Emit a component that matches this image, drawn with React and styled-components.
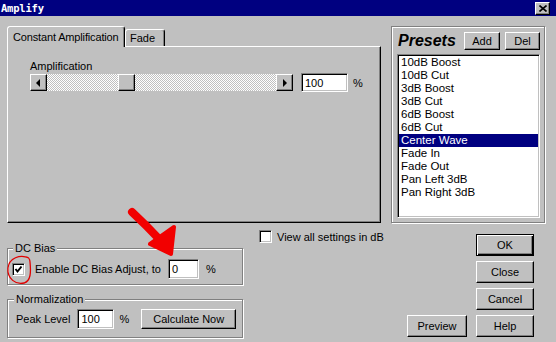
import React from "react";
import styled, { createGlobalStyle } from "styled-components";

const GlobalStyle = createGlobalStyle`
  html, body {
    margin: 0;
    padding: 0;
    background: #c0c0c0;
  }
  body {
    font-family: "Liberation Sans", Arial, sans-serif;
    font-size: 11px;
    color: #000;
  }
  * {
    box-sizing: border-box;
  }
`;

const raised = `
  background: #c0c0c0;
  border: 1px solid;
  border-color: #fff #000 #000 #fff;
  box-shadow: inset -1px -1px 0 #808080;
`;

const sunken = `
  background: #fff;
  border: 1px solid;
  border-color: #808080 #fff #fff #808080;
  box-shadow: inset 1px 1px 0 #000, inset -1px -1px 0 #c0c0c0;
`;

const etched = `
  border: 1px solid #808080;
  box-shadow: inset 1px 1px 0 #fff, 1px 1px 0 #fff;
`;

const Window = styled.div`
  position: relative;
  width: 556px;
  height: 342px;
  overflow: hidden;
  background: #c0c0c0;
`;

const TitleBar = styled.div`
  height: 16px;
  background: #000080;
  display: flex;
  align-items: center;
  justify-content: space-between;
  padding: 0 6px 0 1px;
`;

const Title = styled.div`
  font-family: "DejaVu Sans Mono", "Liberation Mono", monospace;
  font-weight: bold;
  font-size: 10.5px;
  letter-spacing: -0.2px;
  color: #fff;
`;

const CloseBox = styled.div`
  ${raised}
  width: 15px;
  height: 13px;
  display: flex;
  align-items: center;
  justify-content: center;
`;

const Body = styled.div`
  padding: 10px 11px 0 7px;
  display: flex;
  flex-direction: column;
`;

const TopRow = styled.div`
  display: flex;
  height: 197px;
  gap: 10px;
`;

const TabArea = styled.div`
  width: 374px;
  display: flex;
  flex-direction: column;
`;

const TabStrip = styled.div`
  display: flex;
  align-items: flex-end;
  height: 20px;
`;

const Tab = styled.div`
  position: relative;
  z-index: ${(p) => (p.$active ? 1 : 0)};
  width: ${(p) => p.$w}px;
  height: ${(p) => (p.$active ? 21 : 17)}px;
  margin-bottom: ${(p) => (p.$active ? -1 : 0)}px;
  padding-left: ${(p) => (p.$active ? 5 : 4)}px;
  display: flex;
  align-items: center;
  background: #c0c0c0;
  border: 1px solid;
  border-bottom: none;
  border-color: #fff #000 transparent #fff;
  border-radius: 3px 3px 0 0;
  box-shadow: inset -1px 0 0 #808080;
  white-space: nowrap;
  letter-spacing: ${(p) => (p.$active ? "-0.15px" : "0")};
`;

const Panel = styled.div`
  flex: 1;
  border: 1px solid;
  border-color: #fff #000 #000 #fff;
  box-shadow: inset -1px -1px 0 #808080;
  padding: 13px 0 0 22px;
`;

const FieldLabel = styled.div`
  height: 13px;
  line-height: 13px;
`;

const Row = styled.div`
  display: flex;
  align-items: center;
  height: ${(p) => p.$h || 19}px;
`;

const ScrollBar = styled.div`
  display: flex;
  width: 263px;
  height: 17px;
`;

const ArrowButton = styled.div`
  ${raised}
  width: 17px;
  height: 17px;
  display: flex;
  align-items: center;
  justify-content: center;
  &::after {
    content: "";
    border-top: 4px solid transparent;
    border-bottom: 4px solid transparent;
    ${(p) =>
      p.$dir === "left"
        ? "border-right: 4px solid #000; margin-left: -1px;"
        : "border-left: 4px solid #000; margin-left: 1px;"}
  }
`;

const Track = styled.div`
  flex: 1;
  display: flex;
  background-color: #fff;
  background-image: repeating-conic-gradient(#c0c0c0 0 25%, #fff 0 50%);
  background-size: 2px 2px;
`;

const Thumb = styled.div`
  ${raised}
  width: 17px;
  height: 17px;
`;

const TextBox = styled.div`
  ${sunken}
  width: ${(p) => p.$w}px;
  height: ${(p) => p.$h || 19}px;
  margin-left: ${(p) => p.$ml || 0}px;
  padding: 0 3px;
  display: flex;
  align-items: center;
  font-size: 11px;
`;

const Unit = styled.span`
  margin-left: ${(p) => p.$ml || 5}px;
`;

const PresetsGroup = styled.div`
  ${etched}
  width: 154px;
  padding: 5px 4px 4px 5px;
  display: flex;
  flex-direction: column;
`;

const PresetsHeader = styled.div`
  display: flex;
  align-items: center;
  height: 17px;
  gap: 5px;
  margin-bottom: 5px;
`;

const PresetsTitle = styled.div`
  flex: 1;
  padding-left: 1px;
  padding-top: 1px;
  font-size: 16px;
  font-weight: bold;
  font-style: italic;
  color: #000;
`;

const Button = styled.div`
  ${raised}
  width: ${(p) => p.$w}px;
  height: ${(p) => p.$h || 22}px;
  margin-left: ${(p) => p.$ml || 0}px;
  display: flex;
  align-items: center;
  justify-content: center;
  font-size: 11px;
  white-space: nowrap;
  ${(p) =>
    p.$default &&
    `border-color: #000;
     box-shadow: inset 1px 1px 0 #fff, inset -1px -1px 0 #000, inset -2px -2px 0 #808080;`}
`;

const ListBox = styled.div`
  ${sunken}
  flex: 1;
  padding: 1px;
`;

const ListItem = styled.div`
  height: 13px;
  line-height: 13px;
  padding-left: 2px;
  font-size: 11.5px;
  white-space: nowrap;
  background: ${(p) => (p.$selected ? "#000080" : "transparent")};
  color: ${(p) => (p.$selected ? "#fff" : "#000")};
`;

const BottomRow = styled.div`
  display: flex;
  height: 113px;
  margin-top: 6px;
`;

const LeftStack = styled.div`
  width: 236px;
  padding-top: 13px;
  display: flex;
  flex-direction: column;
  gap: 8px;
`;

const GroupBox = styled.fieldset`
  ${etched}
  margin: 0;
  min-width: 0;
  padding: ${(p) => p.$pt}px 5px ${(p) => p.$pb}px ${(p) => p.$pl}px;
`;

const Caption = styled.legend`
  margin-left: ${(p) => p.$ml}px;
  padding: 0 2px;
  line-height: 13px;
  height: 13px;
  background: #c0c0c0;
`;

const CheckBox = styled.div`
  ${sunken}
  width: 13px;
  height: 13px;
  flex: none;
  display: flex;
  align-items: center;
  justify-content: center;
`;

const CheckLabel = styled.span`
  margin-left: ${(p) => p.$ml}px;
  white-space: nowrap;
`;

const MiddleCol = styled.div`
  flex: 1;
  display: flex;
  flex-direction: column;
  justify-content: space-between;
  align-items: flex-start;
  padding: 1px 9px 5px 16px;
  & > :last-child {
    align-self: flex-end;
  }
`;

const ButtonCol = styled.div`
  width: 58px;
  margin-right: 11px;
  padding-top: 5px;
  display: flex;
  flex-direction: column;
  gap: 5px;
`;

const Overlay = styled.svg`
  position: absolute;
  left: 0;
  top: 0;
  pointer-events: none;
`;

const presets = [
  "10dB Boost",
  "10dB Cut",
  "3dB Boost",
  "3dB Cut",
  "6dB Boost",
  "6dB Cut",
  "Center Wave",
  "Fade In",
  "Fade Out",
  "Pan Left 3dB",
  "Pan Right 3dB",
];

const amp = { value: 100, min: 0, max: 300 };
const TRACK = 229;

function Check({ checked }) {
  return (
    <CheckBox>
      {checked && (
        <svg width="9" height="9" viewBox="0 0 9 9">
          <polyline
            points="1.5,4 3.5,6.5 7.5,1.5"
            fill="none"
            stroke="#000"
            strokeWidth="2"
          />
        </svg>
      )}
    </CheckBox>
  );
}

export default function App() {
  const thumbOffset = ((amp.value - amp.min) / (amp.max - amp.min)) * (TRACK - 17);

  return (
    <Window>
      <GlobalStyle />
      <TitleBar>
        <Title>Amplify</Title>
        <CloseBox>
          <svg width="8" height="7" viewBox="0 0 8 7">
            <path d="M0.5 0.5 L7.5 6.5 M7.5 0.5 L0.5 6.5" stroke="#000" strokeWidth="1.6" />
          </svg>
        </CloseBox>
      </TitleBar>

      <Body>
        <TopRow>
          <TabArea>
            <TabStrip>
              <Tab $active $w={118}>Constant Amplification</Tab>
              <Tab $w={40}>Fade</Tab>
            </TabStrip>
            <Panel>
              <FieldLabel>Amplification</FieldLabel>
              <Row>
                <ScrollBar>
                  <ArrowButton $dir="left" />
                  <Track>
                    <Thumb style={{ marginLeft: thumbOffset }} />
                  </Track>
                  <ArrowButton $dir="right" />
                </ScrollBar>
                <TextBox $w={47} $ml={8}>{amp.value}</TextBox>
                <Unit>%</Unit>
              </Row>
            </Panel>
          </TabArea>

          <PresetsGroup>
            <PresetsHeader>
              <PresetsTitle>Presets</PresetsTitle>
              <Button $w={36} $h={18}>Add</Button>
              <Button $w={35} $h={18}>Del</Button>
            </PresetsHeader>
            <ListBox>
              {presets.map((name) => (
                <ListItem key={name} $selected={name === "Center Wave"}>
                  {name}
                </ListItem>
              ))}
            </ListBox>
          </PresetsGroup>
        </TopRow>

        <BottomRow>
          <LeftStack>
            <GroupBox $pt={4} $pb={5} $pl={4}>
              <Caption $ml={1}>DC Bias</Caption>
              <Row $h={20}>
                <Check checked />
                <CheckLabel $ml={10}>Enable DC Bias Adjust, to</CheckLabel>
                <TextBox $w={31} $h={20} $ml={7}>0</TextBox>
                <Unit $ml={7}>%</Unit>
              </Row>
            </GroupBox>
            <GroupBox $pt={3} $pb={8} $pl={8}>
              <Caption $ml={-2}>Normalization</Caption>
              <Row $h={20}>
                <span>Peak Level</span>
                <TextBox $w={37} $h={20} $ml={7}>100</TextBox>
                <Unit>%</Unit>
                <Button $w={95} $h={20} $ml={12}>Calculate Now</Button>
              </Row>
            </GroupBox>
          </LeftStack>

          <MiddleCol>
            <Row $h={13}>
              <Check />
              <CheckLabel $ml={5}>View all settings in dB</CheckLabel>
            </Row>
            <Button $w={60}>Preview</Button>
          </MiddleCol>

          <ButtonCol>
            <Button $w={58} $default>OK</Button>
            <Button $w={58}>Close</Button>
            <Button $w={58}>Cancel</Button>
            <Button $w={58}>Help</Button>
          </ButtonCol>
        </BottomRow>
      </Body>

      <Overlay width="556" height="342" viewBox="0 0 556 342">
        <path
          d="M132 212 Q 147 226 161 241"
          fill="none"
          stroke="#f20000"
          strokeWidth="8"
          strokeLinecap="round"
        />
        <polygon
          points="150,244 174,227 171,254"
          fill="#f20000"
          stroke="#f20000"
          strokeWidth="4"
          strokeLinejoin="round"
        />
        <path
          d="M29 258 C 20 254, 9 258, 8 268 C 7 279, 16 285, 24 283 C 31 281, 31 272, 30 262 C 30 259, 28 257, 26 257"
          fill="none"
          stroke="#e00000"
          strokeWidth="1.3"
        />
      </Overlay>
    </Window>
  );
}
